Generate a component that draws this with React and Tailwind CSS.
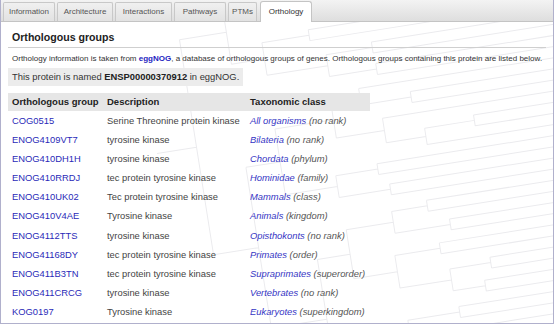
import React from "react";

function rng(seed) {
  let s = seed;
  return () => {
    s = (s * 16807) % 2147483647;
    return (s - 1) / 2147483646;
  };
}

function buildTree() {
  const r = rng(42);
  const N = 44;
  const leafY = [];
  for (let i = 0; i < N; i++) leafY.push(-60 + i * 11);
  const segs = [];
  function node(lo, hi, depth) {
    if (lo === hi) return { x: 640, y: leafY[lo] };
    const mid = lo + Math.floor((hi - lo) * (0.3 + r() * 0.4));
    const a = node(lo, Math.max(lo, mid), depth + 1);
    const b = node(Math.min(hi, mid + 1), hi, depth + 1);
    const x = 190 + depth * 45 + r() * 25;
    segs.push(`M${x} ${a.y}V${b.y}M${x} ${a.y}H${a.x}M${x} ${b.y}H${b.x}`);
    return { x, y: (a.y + b.y) / 2 };
  }
  const root = node(0, N - 1, 0);
  segs.push(`M${root.x - 40} ${root.y}H${root.x}`);
  return segs.join("");
}

const treePath = buildTree();

const tabs = [
  ["Information", "w-[52px]"],
  ["Architecture", "w-[56px]"],
  ["Interactions", "w-[57px]"],
  ["Pathways", "w-[52px]"],
  ["PTMs", "w-[29px]"],
];

const rows = [
  ["COG0515", "Serine Threonine protein kinase", "All organisms", "(no rank)"],
  ["ENOG4109VT7", "tyrosine kinase", "Bilateria", "(no rank)"],
  ["ENOG410DH1H", "tyrosine kinase", "Chordata", "(phylum)"],
  ["ENOG410RRDJ", "tec protein tyrosine kinase", "Hominidae", "(family)"],
  ["ENOG410UK02", "Tec protein tyrosine kinase", "Mammals", "(class)"],
  ["ENOG410V4AE", "Tyrosine kinase", "Animals", "(kingdom)"],
  ["ENOG4112TTS", "tyrosine kinase", "Opisthokonts", "(no rank)"],
  ["ENOG41168DY", "tec protein tyrosine kinase", "Primates", "(order)"],
  ["ENOG411B3TN", "tec protein tyrosine kinase", "Supraprimates", "(superorder)"],
  ["ENOG411CRCG", "tyrosine kinase", "Vertebrates", "(no rank)"],
  ["KOG0197", "Tyrosine kinase", "Eukaryotes", "(superkingdom)"],
];

export default function App() {
  return (
    <div className="w-[554px] h-[324px] relative overflow-hidden bg-white font-['Liberation_Sans',Arial,sans-serif] text-[#333]">
      <svg
        className="absolute inset-0"
        width="554"
        height="324"
        viewBox="0 0 554 324"
      >
        <g transform="rotate(-9 400 160)">
          <path d={treePath} fill="none" stroke="#ebebee" strokeWidth="1" />
        </g>
      </svg>
      <div className="relative flex flex-col h-[324px] border-x border-b border-[#b0b0cc]">
        <div className="h-[22px] flex items-end pl-[2px] gap-[2px] bg-gradient-to-b from-[#f3f3f3] to-[#dedede] border-b border-[#c4c4c4]">
          {tabs.map(([t, w]) => (
            <div
              key={t}
              className={`${w} h-[19px] flex items-center justify-center text-[8px] text-[#555] border border-b-0 border-[#c8c8c8] bg-gradient-to-b from-[#f0f0f0] to-[#e2e2e2] rounded-t-[2px]`}
            >
              {t}
            </div>
          ))}
          <div className="w-[52px] h-[21px] -mb-px ml-[1px] flex items-center justify-center text-[8px] text-[#333] border border-b-0 border-[#c4c4c4] bg-white rounded-t-[3px]">
            Orthology
          </div>
        </div>
        <div className="px-[7px] flex flex-col">
          <div className="mt-[8px] pb-[3px] border-b border-[#cfcfcf] pl-[4px] text-[10.6px] leading-[14px] font-bold text-[#222]">
            Orthologous groups
          </div>
          <div className="mt-[6px] pl-[4px] text-[8px] leading-[10px] whitespace-nowrap text-[#333]">
            Orthology information is taken from{" "}
            <span className="text-[#2424c0] font-bold">eggNOG</span>, a database of
            orthologous groups of genes. Orthologous groups containing this protein
            are listed below.
          </div>
          <div className="mt-[4px] w-[235px] h-[18px] flex items-center pl-[4px] bg-[#ececec] text-[9.4px] whitespace-nowrap text-[#333]">
            This protein is named&nbsp;<span className="font-bold text-[#222]">ENSP00000370912</span>&nbsp;in eggNOG.
          </div>
          <div className="mt-[7px] w-[362px] grid grid-cols-[95px_143px_124px]">
            {["Orthologous group", "Description", "Taxonomic class"].map((h) => (
              <div
                key={h}
                className="h-[18px] flex items-center pl-[4px] bg-[#e6e6e6] text-[9.5px] font-bold text-[#222] whitespace-nowrap"
              >
                {h}
              </div>
            ))}
            {rows.map(([g, d, t, rank]) => (
              <React.Fragment key={g}>
                <div className="h-[19.2px] flex items-center pl-[4px] text-[9.4px] text-[#2a2ab8] whitespace-nowrap">
                  {g}
                </div>
                <div className="h-[19.2px] flex items-center pl-[4px] text-[9.4px] text-[#444] whitespace-nowrap">
                  {d}
                </div>
                <div className="h-[19.2px] flex items-center pl-[4px] text-[9.4px] italic whitespace-nowrap">
                  <span className="text-[#3535c4]">{t}</span>
                  <span className="text-[#555]">&nbsp;{rank}</span>
                </div>
              </React.Fragment>
            ))}
          </div>
        </div>
      </div>
    </div>
  );
}
